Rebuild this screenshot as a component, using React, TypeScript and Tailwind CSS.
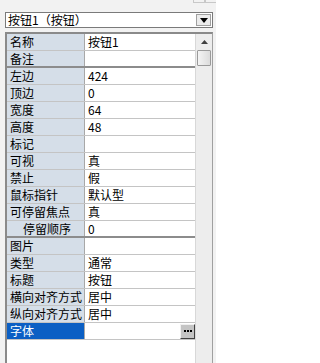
const rows: { label: string; value: string; indent?: boolean; sep?: boolean; selected?: boolean; button?: boolean }[] = [
  { label: '名称', value: '按钮1' },
  { label: '备注', value: '', sep: true },
  { label: '左边', value: '424' },
  { label: '顶边', value: '0' },
  { label: '宽度', value: '64' },
  { label: '高度', value: '48' },
  { label: '标记', value: '' },
  { label: '可视', value: '真' },
  { label: '禁止', value: '假' },
  { label: '鼠标指针', value: '默认型' },
  { label: '可停留焦点', value: '真' },
  { label: '停留顺序', value: '0', indent: true, sep: true },
  { label: '图片', value: '' },
  { label: '类型', value: '通常' },
  { label: '标题', value: '按钮' },
  { label: '横向对齐方式', value: '居中' },
  { label: '纵向对齐方式', value: '居中' },
  { label: '字体', value: '', selected: true, button: true },
]

export default function App() {
  return (
    <div
      className="flex h-[363px] w-[216px] flex-col overflow-hidden bg-[#f2f2f2] text-[12px] leading-none text-black"
      style={{ fontFamily: '"Noto Sans CJK SC", "Liberation Sans", sans-serif' }}
    >
      {/* top strip */}
      <div className="flex h-[12px] justify-end">
        <div className="h-[3px] w-[12px] border-r border-b border-l border-[#c8c8c8]" />
        <div className="h-[3px] w-[11px] border-b border-l border-[#c8c8c8]" />
      </div>

      {/* object combo */}
      <div className="mx-[5px] flex h-[16px] w-[208px] items-stretch border border-[#7a7a7a] bg-white">
        <div className="flex flex-1 items-center pl-[2px] text-[12px]">按钮1（按钮）</div>
        <div className="m-[1px] flex w-[15px] items-center justify-center border border-[#a0a0a0] bg-[#ececec]">
          <svg width="8" height="5" viewBox="0 0 8 5">
            <path d="M0 0h8L4 5z" fill="#000" />
          </svg>
        </div>
      </div>

      {/* property grid */}
      <div className="mt-[4px] ml-[5px] flex w-[208px] flex-1 border-t-2 border-r border-l-2 border-[#8a8a8a] border-r-[#a0a0a0] border-t-[#8a8a8a]">
        <div className="flex w-[188px] flex-col bg-white">
          {rows.map((r) => (
            <div
              key={r.label}
              className={`flex h-[17px] ${r.sep ? 'border-b-2 border-[#8c8c8c]' : 'border-b border-[#c4c4c4]'}`}
            >
              <div
                className={`flex w-[78px] items-center border-r border-[#a8a8a8] ${
                  r.selected ? 'bg-[#0b5fc4] text-white' : 'bg-[#d5dee8]'
                } ${r.indent ? 'pl-[16px]' : 'pl-[3px]'}`}
              >
                {r.label}
              </div>
              <div className="flex flex-1 items-center justify-between pl-[3px]">
                <span>{r.value}</span>
                {r.button && (
                  <div className="flex h-[15px] w-[15px] items-center justify-center gap-[1px] border border-t-[#f0f0f0] border-r-[#404040] border-b-[#404040] border-l-[#f0f0f0] bg-[#c4c4c4]">
                    <span className="h-[2px] w-[2px] bg-black" />
                    <span className="h-[2px] w-[2px] bg-black" />
                    <span className="h-[2px] w-[2px] bg-black" />
                  </div>
                )}
              </div>
            </div>
          ))}
        </div>

        {/* scrollbar */}
        <div className="flex w-[17px] flex-col items-center border-l border-[#d8d8d8] bg-[#ededed]">
          <div className="flex h-[16px] w-full items-center justify-center">
            <svg width="7" height="4" viewBox="0 0 7 4">
              <path d="M3.5 0L7 4H0z" fill="#404040" />
            </svg>
          </div>
          <div className="h-[16px] w-[14px] rounded-[1px] border border-[#9a9a9a] bg-gradient-to-r from-[#f4f4f4] to-[#dcdcdc]" />
        </div>
      </div>
    </div>
  )
}
